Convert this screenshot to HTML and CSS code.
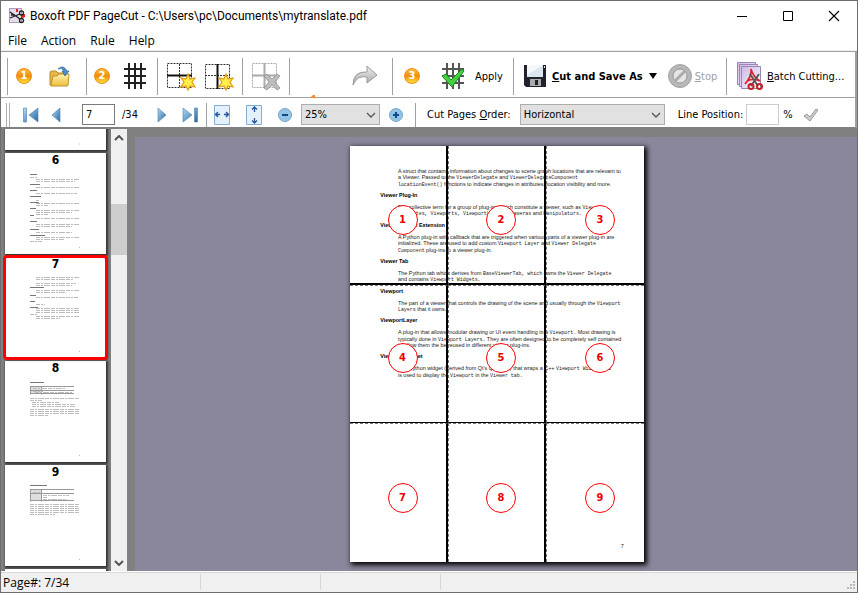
FILE: index.html
```html
<!DOCTYPE html>
<html lang="en">
<head>
    <meta charset="UTF-8">
    <meta name="viewport" content="width=device-width, initial-scale=1.0">
    <title>Boxoft PDF PageCut</title>
    <link rel="stylesheet" href="styles.css">
</head>
<body>
    <!-- Shared icon parts -->
    <svg class="defs" aria-hidden="true">
        <defs>
            <linearGradient id="blue" x1="0" y1="0" x2="1" y2="1">
                <stop offset="0" stop-color="#b4dcf6"/><stop offset="1" stop-color="#2565a0"/>
            </linearGradient>
            <linearGradient id="grey" x1="0" y1="0" x2="0" y2="1">
                <stop offset="0" stop-color="#eeeeee"/><stop offset="1" stop-color="#a8a8a8"/>
            </linearGradient>
            <linearGradient id="folder" x1="0" y1="0" x2="0" y2="1">
                <stop offset="0" stop-color="#fff3ae"/><stop offset="1" stop-color="#edbd3c"/>
            </linearGradient>
            <linearGradient id="lilac" x1="0" y1="0" x2="1" y2="1">
                <stop offset="0" stop-color="#cdb8e4"/><stop offset="1" stop-color="#fdfaff"/>
            </linearGradient>
            <path id="star" d="M0-8 2-3 7-4 4 0 7 5 2 4 0 8-2 4-7 5-4 0-7-4-2-3Z" fill="#fff04a" stroke="#e69a10" stroke-width="1.2"/>
            <path id="chevron" d="M1 1 5 5 9 1" fill="none" stroke="#555" stroke-width="1.3"/>
        </defs>
    </svg>

    <header class="titlebar">
        <svg class="app-icon" width="16" height="16" viewBox="0 0 16 16">
            <rect x=".5" y=".5" width="12" height="14" fill="#e4dcec" stroke="#a99db8"/>
            <path d="M9 1v3h-2V1ZM12 6h4v3l-4 2Z" fill="#e32222"/>
            <g fill="none" stroke="#222" stroke-width="1.3"><path d="M1 4 11 11M1 10 11 6M2 7h4"/><circle cx="12.500" cy="5" r="2"/><circle cx="12.500" cy="12.500" r="2"/></g>
        </svg>
        <h1>Boxoft PDF PageCut - C:\Users\pc\Documents\mytranslate.pdf</h1>
        <div class="window-buttons">
            <button type="button" aria-label="Minimize"><svg width="12" height="12"><path d="M1 6.500h10" stroke="#000"/></svg></button>
            <button type="button" aria-label="Maximize"><svg width="12" height="12"><path d="M1.500 1.500h9v9h-9Z" fill="none" stroke="#000"/></svg></button>
            <button type="button" aria-label="Close"><svg width="12" height="12"><path d="M1 1 11 11M11 1 1 11" stroke="#000" stroke-width="1.200"/></svg></button>
        </div>
    </header>

    <nav class="menubar">
        <button type="button">File</button>
        <button type="button">Action</button>
        <button type="button">Rule</button>
        <button type="button">Help</button>
    </nav>

    <div class="toolbar main-toolbar">
        <div class="grip"></div>
        <div class="group group-open">
            <span class="step">1</span>
            <button type="button" aria-label="Open">
                <svg width="22" height="22" viewBox="0 0 22 22">
                    <path d="M1 8q0-2 2-2h4l2 2h9v12H1Z" fill="#e6b840" stroke="#b98a25"/>
                    <path d="M2 20 4 11h4l2-2h10l-1 11q0 1-1 1H2Z" fill="url(#folder)" stroke="#c0922e"/>
                    <path d="M9 4q5-5 9 2h2l-4 5-3-5h2q-2-4-6-2Z" fill="#4f8fc4" stroke="#2a6498" stroke-width=".7"/>
                </svg>
            </button>
        </div>
        <div class="group group-rules">
            <span class="step">2</span>
            <button type="button" aria-label="Rule grid">
                <svg width="24" height="26" viewBox="0 0 24 26"><path d="M6 0v26M12 0v26M18 0v26M1 6h22M1 13h22M1 20h22" stroke="#222" stroke-width="2"/></svg>
            </button>
        </div>
        <div class="group group-lines">
            <button type="button" aria-label="Add horizontal line">
                <svg width="30" height="30" viewBox="0 0 30 30">
                    <path d="M1.500 2.500h24v24h-24ZM13.500 3v24" fill="none" stroke="#333" stroke-dasharray="2 1"/>
                    <path d="M1 14.500h25" stroke="#111" stroke-width="2"/><use href="#star" x="22" y="21"/>
                </svg>
            </button>
            <button type="button" aria-label="Add vertical line">
                <svg width="30" height="30" viewBox="0 0 30 30">
                    <path d="M1.500 3.500h24v24h-24ZM1 14.500h25" fill="none" stroke="#333" stroke-dasharray="2 1"/>
                    <path d="M13.500 3v25" stroke="#111" stroke-width="2"/><use href="#star" x="22" y="21"/>
                </svg>
            </button>
        </div>
        <div class="group group-delete">
            <button type="button" aria-label="Delete line" disabled>
                <svg width="30" height="30" viewBox="0 0 30 30">
                    <path d="M1.500 2.500h24v24h-24Z" fill="none" stroke="#aaa" stroke-dasharray="2 1"/>
                    <path d="M13.500 2v25M1 14.500h25" stroke="#aaa" stroke-width="2"/>
                    <path d="m13 15 3-2 5 5 5-5 3 2-5 6 5 6-3 2-5-5-5 5-3-2 5-6Z" fill="#bcbcbc" stroke="#909090" stroke-width=".8"/>
                </svg>
            </button>
        </div>
        <div class="group group-history">
            <svg class="tip" width="6" height="3" viewBox="0 0 6 3"><path d="M0 3 3 0h2v3Z" fill="#f08b2a"/></svg>
            <button type="button" aria-label="Redo" disabled>
                <svg width="26" height="22" viewBox="0 0 26 22"><path d="M1 20Q1 6 15 7V1l10 9-10 8v-6Q5 10 1 20Z" fill="url(#grey)" stroke="#999"/></svg>
            </button>
        </div>
        <div class="group group-apply">
            <span class="step">3</span>
            <button type="button">
                <svg width="24" height="26" viewBox="0 0 24 26">
                    <path d="M6 0v26M12 0v26M18 0v26M1 6h22M1 13h22M1 20h22" stroke="#555" stroke-width="2"/>
                    <path d="m1 13 4-2 5 6L21 6l2 2-12 16Z" fill="#43cf3e" stroke="#178d1c"/>
                </svg>
                <span>Apply</span>
            </button>
        </div>
        <div class="group group-cut">
            <button type="button" class="save">
                <svg width="22" height="22" viewBox="0 0 22 22">
                    <path d="M0 0h22v22H2l-2-2Z" fill="#22222c"/><path d="M3 0h16v12H3Z" fill="#dce6f0"/><path d="M3 0h16L3 10Z" fill="#f5f8fb"/>
                    <path d="M6 14h11v7H6Z" fill="#a9abb0"/><path d="M11 15h3v5h-3Z" fill="#222"/><path d="M20 1h1v2h-1Z" fill="#ddd"/>
                </svg>
                <span><u>C</u>ut and Save As</span>
                <svg width="8" height="6"><path d="M0 0h8L4 6Z"/></svg>
            </button>
            <button type="button" class="stop" disabled>
                <svg width="24" height="24" viewBox="0 0 24 24">
                    <circle cx="12" cy="12" r="11.500" fill="#b7b7b7" stroke="#a2a2a2"/><circle cx="12" cy="12" r="7" fill="#e5e5e5" stroke="#999"/><path d="m7 17 10-10" stroke="#aaa" stroke-width="3"/>
                </svg>
                <span><u>S</u>top</span>
            </button>
        </div>
        <div class="group group-batch">
            <button type="button">
                <svg width="27" height="28" viewBox="0 0 27 28">
                    <g fill="url(#lilac)" stroke="#9a83b5"><path d="M.5.5h18v22H.5Z"/><path d="M2.500 2.500h18v22h-18Z"/><path d="M4.500 4.500h19v22h-19Z"/></g>
                    <path d="M14 7q1 7-6 15 4-7 15-3-7-4-9-12Z" fill="none" stroke="#e22222" stroke-width="1.600"/>
                    <path d="m13 12 8 12m1-12-8 12" stroke="#555" stroke-width="1.800"/>
                    <g fill="none" stroke="#c02525" stroke-width="2"><circle cx="14" cy="24.500" r="2.500"/><circle cx="22.500" cy="24.500" r="2.500"/></g>
                </svg>
                <span><u>B</u>atch Cutting...</span>
            </button>
        </div>
    </div>

    <div class="toolbar page-toolbar">
        <div class="grip double"></div>
        <div class="group group-nav">
            <button type="button" aria-label="First page"><svg width="16" height="16" viewBox="0 0 16 16"><path d="M.5 1h3v14h-3ZM15 1v14L6 8Z" fill="url(#blue)" stroke="#5b8ab3" stroke-width=".7"/></svg></button>
            <button type="button" aria-label="Previous page"><svg width="10" height="16" viewBox="0 0 10 16"><path d="M9 1v14L1 8Z" fill="url(#blue)" stroke="#5b8ab3" stroke-width=".7"/></svg></button>
            <input type="text" class="page-input" value="7" aria-label="Page number">
            <span class="page-total">/34</span>
            <button type="button" aria-label="Next page"><svg width="10" height="16" viewBox="0 0 10 16"><path d="M1 1v14l8-7Z" fill="url(#blue)" stroke="#5b8ab3" stroke-width=".7"/></svg></button>
            <button type="button" aria-label="Last page"><svg width="16" height="16" viewBox="0 0 16 16"><path d="M12.500 1h3v14h-3ZM1 1v14l9-7Z" fill="url(#blue)" stroke="#5b8ab3" stroke-width=".7"/></svg></button>
        </div>
        <div class="group group-zoom">
            <button type="button" aria-label="Fit width"><svg width="16" height="20" viewBox="0 0 16 20"><path d="M.5.5h15v19H.5Z" fill="#e4f0fb" stroke="#88add4"/><path d="M1 9.500h5M10 9.500h5M4 7 1.500 9.500 4 12M12 7l2.500 2.500L12 12" fill="none" stroke="#23579a" stroke-width="1.300"/></svg></button>
            <button type="button" aria-label="Fit height"><svg width="16" height="20" viewBox="0 0 16 20"><path d="M.5.5h15v19H.5Z" fill="#e4f0fb" stroke="#88add4"/><path d="M8.500 2v5M8.500 13v5M6 4.500 8.500 2 11 4.500M6 15.500 8.500 18l2.500-2.500" fill="none" stroke="#23579a" stroke-width="1.300"/></svg></button>
            <button type="button" aria-label="Zoom out"><svg width="14" height="14" viewBox="0 0 14 14"><circle cx="7" cy="7" r="6.500" fill="#93c3e5" stroke="#78a7ca"/><path d="M4 7h6" stroke="#114a88" stroke-width="2"/></svg></button>
            <div class="select zoom-select">
                <select aria-label="Zoom"><option>25%</option><option>50%</option><option>100%</option></select>
                <svg width="10" height="6"><use href="#chevron"/></svg>
            </div>
            <button type="button" aria-label="Zoom in"><svg width="14" height="14" viewBox="0 0 14 14"><circle cx="7" cy="7" r="6.500" fill="#93c3e5" stroke="#78a7ca"/><path d="M4 7h6M7 4v6" stroke="#114a88" stroke-width="2"/></svg></button>
        </div>
        <div class="group group-order">
            <label for="order">Cut Pages <u>O</u>rder:</label>
            <div class="select order-select">
                <select id="order"><option>Horizontal</option><option>Vertical</option></select>
                <svg width="10" height="6"><use href="#chevron"/></svg>
            </div>
            <label for="position" class="position-label">Line Position:</label>
            <input type="text" id="position" class="position-input">
            <span class="percent">%</span>
            <button type="button" aria-label="Set position" disabled><svg width="16" height="14" viewBox="0 0 16 14"><path d="m1 8 3-2 3 3 6-8 2 1-8 11Z" fill="#ccc" stroke="#999"/></svg></button>
        </div>
    </div>

    <main class="workspace">
        <aside class="thumbs">
            <div class="thumb-list">
                <div class="thumb"><svg viewBox="0 0 101 101"><path class="body-line" d="M74 95h1"/></svg></div>
                <div class="thumb"><span>6</span><svg viewBox="0 14.500 101 87">
                    <path class="head-line" d="M25 22h7M25 32h10M25 38h7M25 44h11M25 50h9M25 56h6M25 63h4M25 69h7M25 77h9M25 83h15"/>
                    <path class="body-line" d="M25 25h8M31 27h43M31 29h39M31 35h43M31 41h41M31 48h3M31 51h43M31 53h12M31 58h43M31 60h36M31 62h12M31 66h43M31 72h43M31 74h36M31 80h36M31 85h43M31 87h28M25 89h12M74 95h1"/></svg></div>
                <div class="thumb selected"><span>7</span><svg viewBox="0 14.500 101 87">
                    <path class="head-line" d="M25 31h14M25 39h6M25 45h5M25 51h8"/>
                    <path class="body-line" d="M31 21h43M31 23h38M31 27h40M31 29h36M31 34h43M31 36h30M31 41h42M31 48h9M31 52h43M31 54h43M31 56h43M25 58h7M31 60h43M31 62h24M74 95h1"/></svg></div>
                <div class="thumb"><span>8</span><svg viewBox="0 14.500 101 87">
                    <path class="head-line" d="M25 22h14"/><path d="M25 26h11v7H25Z" fill="#ddd"/>
                    <path class="table-line" d="M25 26h44M25 30h44M25 33h44M25.500 26v8M36.500 26v8"/>
                    <path class="body-line" d="M28 28h32M28 31h10M30 32h38M25 38h50M25 40h12M27 42h27M27 44h43M27 46h43M25 49h50M25 51h50M25 53h50M25 55h18M74 95h1"/></svg></div>
                <div class="thumb"><span>9</span><svg viewBox="0 14.500 101 87">
                    <path class="head-line" d="M25 21h17"/><path d="M25 25h11v11H25Z" fill="#ddd"/>
                    <path class="table-line" d="M25 25h44M25 29h44M25 36h44M25.500 25v12M36.500 25v12"/>
                    <path class="body-line" d="M28 28h8M38 31h26M38 33h5M38 35h24M25 40h50M25 42h48M25 44h50M25 46h50M25 48h50M25 50h25M74 95h1"/></svg></div>
                <div class="thumb"><span>10</span></div>
            </div>
            <div class="scrollbar">
                <button type="button" aria-label="Scroll up"><svg width="10" height="6"><path d="M1 5 5 1l4 4" fill="none" stroke="#555" stroke-width="2"/></svg></button>
                <div class="track"><div class="handle"></div></div>
                <button type="button" aria-label="Scroll down"><svg width="10" height="6"><path d="M1 1l4 4 4-4" fill="none" stroke="#555" stroke-width="2"/></svg></button>
            </div>
        </aside>

        <section class="viewer">
            <div class="sheet">
                <!-- A4 page in points -->
                <svg class="page" viewBox="0 0 595 842">
                    <g class="copy">
                        <text x="97" y="54">A struct that contains information about changes to scene graph locations that are relevant to</text>
                        <text x="97" y="67">a Viewer. Passed to the <tspan>ViewerDelegate</tspan> and <tspan>ViewerDelegateComponent</tspan></text>
                        <text x="97" y="80"><tspan>locationEvent()</tspan> functions to indicate changes in attributes, location visibility and more.</text>
                        <text x="97" y="127">The collective term for a group of plug-ins which constitute a viewer, such as <tspan>Viewer</tspan></text>
                        <text x="97" y="140"><tspan>Delegates, Viewports, ViewportLayers, Cameras</tspan> and <tspan>Manipulators.</tspan></text>
                        <text x="97" y="188">A Python plug-in with callback that are triggered when various parts of a viewer plug-in are</text>
                        <text x="97" y="201">initialized. These are used to add custom <tspan>Viewport Layer</tspan> and <tspan>Viewer Delegate</tspan></text>
                        <text x="97" y="214"><tspan>Component</tspan> plug-ins to a viewer plug-in.</text>
                        <text x="97" y="261">The Python tab which derives from <tspan>BaseViewerTab, which</tspan> owns the <tspan>Viewer Delegate</tspan></text>
                        <text x="97" y="274">and contains <tspan>Viewport Widgets.</tspan></text>
                        <text x="97" y="321">The part of a viewer that controls the drawing of the scene and usually through the <tspan>Viewport</tspan></text>
                        <text x="97" y="334"><tspan>Layers</tspan> that it owns.</text>
                        <text x="97" y="381">A plug-in that allows modular drawing or UI event handling in a <tspan>Viewport.</tspan> Most drawing is</text>
                        <text x="97" y="394">typically done in <tspan>Viewport Layers.</tspan> They are often designed to be completely self contained</text>
                        <text x="97" y="407">to allow them the be reused in different viewer plug-ins.</text>
                        <text x="97" y="454">The Python widget (derived from Qt's QWidget) that wraps a C++ <tspan>Viewport Widget</tspan> and</text>
                        <text x="97" y="467">is used to display the <tspan>Viewport</tspan> in the <tspan>Viewer tab.</tspan></text>
                        <text x="548" y="813">7</text>
                    </g>
                    <g class="terms">
                        <text x="61" y="104">Viewer Plug-In</text>
                        <text x="61" y="164">Viewer Plug-In Extension</text>
                        <text x="61" y="237">Viewer Tab</text>
                        <text x="61" y="297">Viewport</text>
                        <text x="61" y="357">ViewportLayer</text>
                        <text x="61" y="430">Viewport Widget</text>
                    </g>
                </svg>
                <div class="cuts">
                    <div><b>1</b></div><div><b>2</b></div><div><b>3</b></div>
                    <div><b>4</b></div><div><b>5</b></div><div><b>6</b></div>
                    <div><b>7</b></div><div><b>8</b></div><div><b>9</b></div>
                </div>
            </div>
        </section>
    </main>

    <footer class="statusbar">
        <span>Page#: 7/34</span><span></span><span></span><span></span>
        <svg width="9" height="9" viewBox="0 0 9 9"><path d="M6 0h2v2H6ZM3 3h2v2H3ZM6 3h2v2H6ZM0 6h2v2H0ZM3 6h2v2H3ZM6 6h2v2H6Z" fill="#b8b8b8"/></svg>
    </footer>
</body>
</html>
```
FILE: styles.css
```css
* {
    box-sizing: border-box;
}

body {
    margin: 0;
    height: 100vh;
    display: flex;
    flex-direction: column;
    overflow: hidden;
    border: 1px solid #6e6e6e;
    background-color: #ffffff;
    color: #000000;
    font-family: "DejaVu Sans Condensed", "DejaVu Sans", sans-serif;
    font-size: 11px;
}

svg {
    display: block;
    flex: none;
}

.defs {
    position: absolute;
    width: 0;
    height: 0;
}

button {
    display: flex;
    align-items: center;
    justify-content: center;
    flex: none;
    padding: 0;
    border: none;
    background: none;
    color: inherit;
    font: inherit;
    white-space: nowrap;
}

/* Title bar and menu */
.titlebar {
    display: flex;
    align-items: center;
    height: 29px;
    padding-left: 8px;
    font-family: Roboto, sans-serif;
}

.titlebar h1 {
    flex: 1;
    margin: 0 0 0 5px;
    font-size: 12px;
    font-weight: normal;
    white-space: nowrap;
}

.window-buttons {
    display: flex;
}

.window-buttons button {
    width: 46px;
    height: 29px;
}

.menubar {
    display: flex;
    gap: 14px;
    height: 21px;
    padding-left: 7px;
    border-bottom: 1px solid #f0f0f0;
    font-family: "Open Sans", sans-serif;
    font-size: 12px;
}

/* Toolbars */
.toolbar {
    display: flex;
    align-items: center;
    flex: none;
    border: 1px solid #a0a0a0;
    border-width: 1px 2px 1px 0;
}

.main-toolbar {
    height: 47px;
    padding-top: 3px;
}

.page-toolbar {
    height: 31px;
    padding-top: 4px;
    border-top: none;
    border-bottom: 2px solid #808080;
}

.grip {
    width: 7px;
    height: 37px;
    border-right: 1px solid #a0a0a0;
}

.double {
    width: 9px;
    height: 24px;
    border-right: 4px double #b0b0b0;
}

.group {
    display: flex;
    align-items: center;
    flex: none;
    height: 37px;
    border-right: 1px solid #a0a0a0;
}

.page-toolbar .group {
    height: 24px;
}

.step {
    flex: none;
    width: 16px;
    height: 16px;
    border: 1px solid #ee8a18;
    border-radius: 50%;
    background: linear-gradient(#ffc040, #f08c08 50%, #ffe23a);
    color: #ffffff;
    font-size: 11px;
    font-weight: bold;
    line-height: 14px;
    text-align: center;
}

.group-open {
    width: 79px;
    padding-left: 8px;
    gap: 17px;
}

.group-rules {
    width: 71px;
    padding-left: 7px;
    gap: 13px;
}

.group-lines {
    width: 85px;
    padding-left: 8px;
    gap: 8px;
}

.group-delete {
    width: 47px;
    justify-content: center;
}

.group-history {
    position: relative;
    width: 103px;
    justify-content: flex-end;
    padding-right: 14px;
}

/* Top of a badge cut off by the bar below */
.tip {
    position: absolute;
    left: 20px;
    bottom: -3px;
}

.group-apply {
    width: 121px;
    padding-left: 11px;
    gap: 21px;
}

.group-apply button {
    gap: 10px;
}

.group-cut {
    width: 213px;
    padding-left: 10px;
    gap: 11px;
}

.save {
    gap: 6px;
    font-weight: bold;
}

.stop {
    gap: 3px;
    color: #a0a0a0;
}

.group-batch {
    padding-left: 10px;
    border-right: none;
}

.group-batch button {
    gap: 3px;
}

.group-nav {
    width: 197px;
    padding-left: 13px;
}

.group-nav button:first-child {
    margin-right: 12px;
}

.group-nav button:last-child {
    margin-left: 15px;
}

.page-input,
.position-input {
    flex: none;
    width: 33px;
    height: 21px;
    border: 1px solid #7a7a7a;
    padding: 0 3px;
    font: inherit;
}

.page-input {
    margin: 0 7px 0 21px;
}

.page-total {
    width: 35px;
}

.group-zoom {
    width: 209px;
    padding-left: 7px;
    gap: 16px;
}

.zoom-select {
    width: 79px;
    margin: 0 -7px;
}

.select {
    position: relative;
    flex: none;
}

.select select {
    appearance: none;
    display: block;
    width: 100%;
    height: 21px;
    padding: 0 3px;
    border: 1px solid #adadad;
    border-radius: 0;
    background-color: #e1e1e1;
    color: #000000;
    font: inherit;
}

.select svg {
    position: absolute;
    right: 4px;
    top: 8px;
    pointer-events: none;
}

.group-order {
    padding-left: 11px;
    border-right: none;
}

.order-select {
    width: 145px;
    margin-left: 9px;
}

.position-label {
    margin-left: 13px;
}

.position-input {
    margin: 0 4px 0 3px;
    border-color: #cccccc;
}

.percent {
    margin-right: 10px;
}

/* Thumbnails */
.workspace {
    display: flex;
    flex: 1;
    min-height: 0;
    background-color: #808080;
}

.thumbs {
    display: flex;
    flex: none;
    width: 126px;
}

.thumb-list {
    display: flex;
    flex-direction: column;
    gap: 3px;
    width: 110px;
    overflow: hidden;
    padding-left: 4px;
}

.thumb-list .thumb:first-child {
    margin-top: -80px;
}

.thumb {
    flex: none;
    width: 101px;
    height: 101px;
    background-color: #ffffff;
    box-shadow: 1px 1px 2px 1px #333333;
}

.thumb span {
    display: block;
    height: 14px;
    font-size: 12px;
    font-weight: bold;
    line-height: 14px;
    text-align: center;
}

.selected {
    outline: 3px solid #ff0000;
    outline-offset: -1px;
    border-radius: 2px;
    z-index: 1;
}

.head-line,
.body-line,
.table-line {
    fill: none;
    stroke: #777777;
}

.body-line {
    stroke: #bcbcbc;
    stroke-dasharray: 4 1 2 1 6 1;
}

.table-line {
    stroke: #999999;
}

.scrollbar {
    display: flex;
    flex-direction: column;
    width: 16px;
    background-color: #f0f0f0;
}

.scrollbar button {
    width: 16px;
    height: 17px;
}

.track {
    flex: 1;
    padding-top: 58px;
}

.handle {
    height: 51px;
    background-color: #cdcdcd;
}

/* Page preview */
.viewer {
    display: flex;
    flex: 1;
    align-items: center;
    justify-content: center;
    min-width: 0;
    margin: 8px 0 0 8px;
    padding-left: 2px;
    background-color: #8a879c;
}

.sheet {
    position: relative;
    width: 294px;
    height: 416px;
    background-color: #ffffff;
    box-shadow: 2px 2px 5px 1px #000000;
}

.page {
    width: 100%;
    height: 100%;
}

.copy {
    fill: #222222;
    font-family: "Liberation Sans", sans-serif;
    font-size: 11px;
}

.copy tspan {
    font-family: "Liberation Mono", monospace;
    font-size: 10px;
}

.terms {
    font-family: "Liberation Sans", sans-serif;
    font-size: 11px;
    font-weight: bold;
}

.cuts {
    position: absolute;
    inset: 0;
    display: grid;
    grid-template: repeat(3, 1fr) / repeat(3, 1fr);
}

.cuts div {
    display: flex;
    align-items: center;
    justify-content: center;
    padding: 9px 0 0 9px;
    border: 0 solid #000000;
}

.cuts div:not(:nth-child(3n)) {
    border-right-width: 2px;
}

.cuts div:not(:nth-child(3n + 1)) {
    border-left: 1px dashed #777777;
}

.cuts div:nth-child(-n + 3) {
    padding-top: 12px;
    border-bottom-width: 2px;
}

.cuts div:nth-child(n + 4):nth-child(-n + 6) {
    border-bottom-width: 1px;
}

.cuts div:nth-child(n + 4) {
    border-top: 1px dashed #777777;
}

.cuts b {
    width: 30px;
    height: 30px;
    border: 1px solid #ff0000;
    border-radius: 50%;
    background-color: #ffffff;
    color: #ee0000;
    font-size: 11px;
    line-height: 28px;
    text-align: center;
}

/* Status bar */
.statusbar {
    display: flex;
    flex: none;
    height: 21px;
    border-top: 1px solid #ffffff;
    background-color: #f0f0f0;
    box-shadow: inset 0 1px #d7d7d7;
    font-family: "Open Sans", sans-serif;
    font-size: 12px;
}

.statusbar span {
    width: 120px;
    margin: 2px 0;
    border-right: 1px solid #d7d7d7;
    line-height: 18px;
}

.statusbar span:first-child {
    width: 200px;
    padding-left: 2px;
}

.statusbar span:nth-child(4) {
    flex: 1;
    border-right: none;
}

.statusbar svg {
    align-self: flex-end;
    margin: 0 1px 2px 0;
}
```
